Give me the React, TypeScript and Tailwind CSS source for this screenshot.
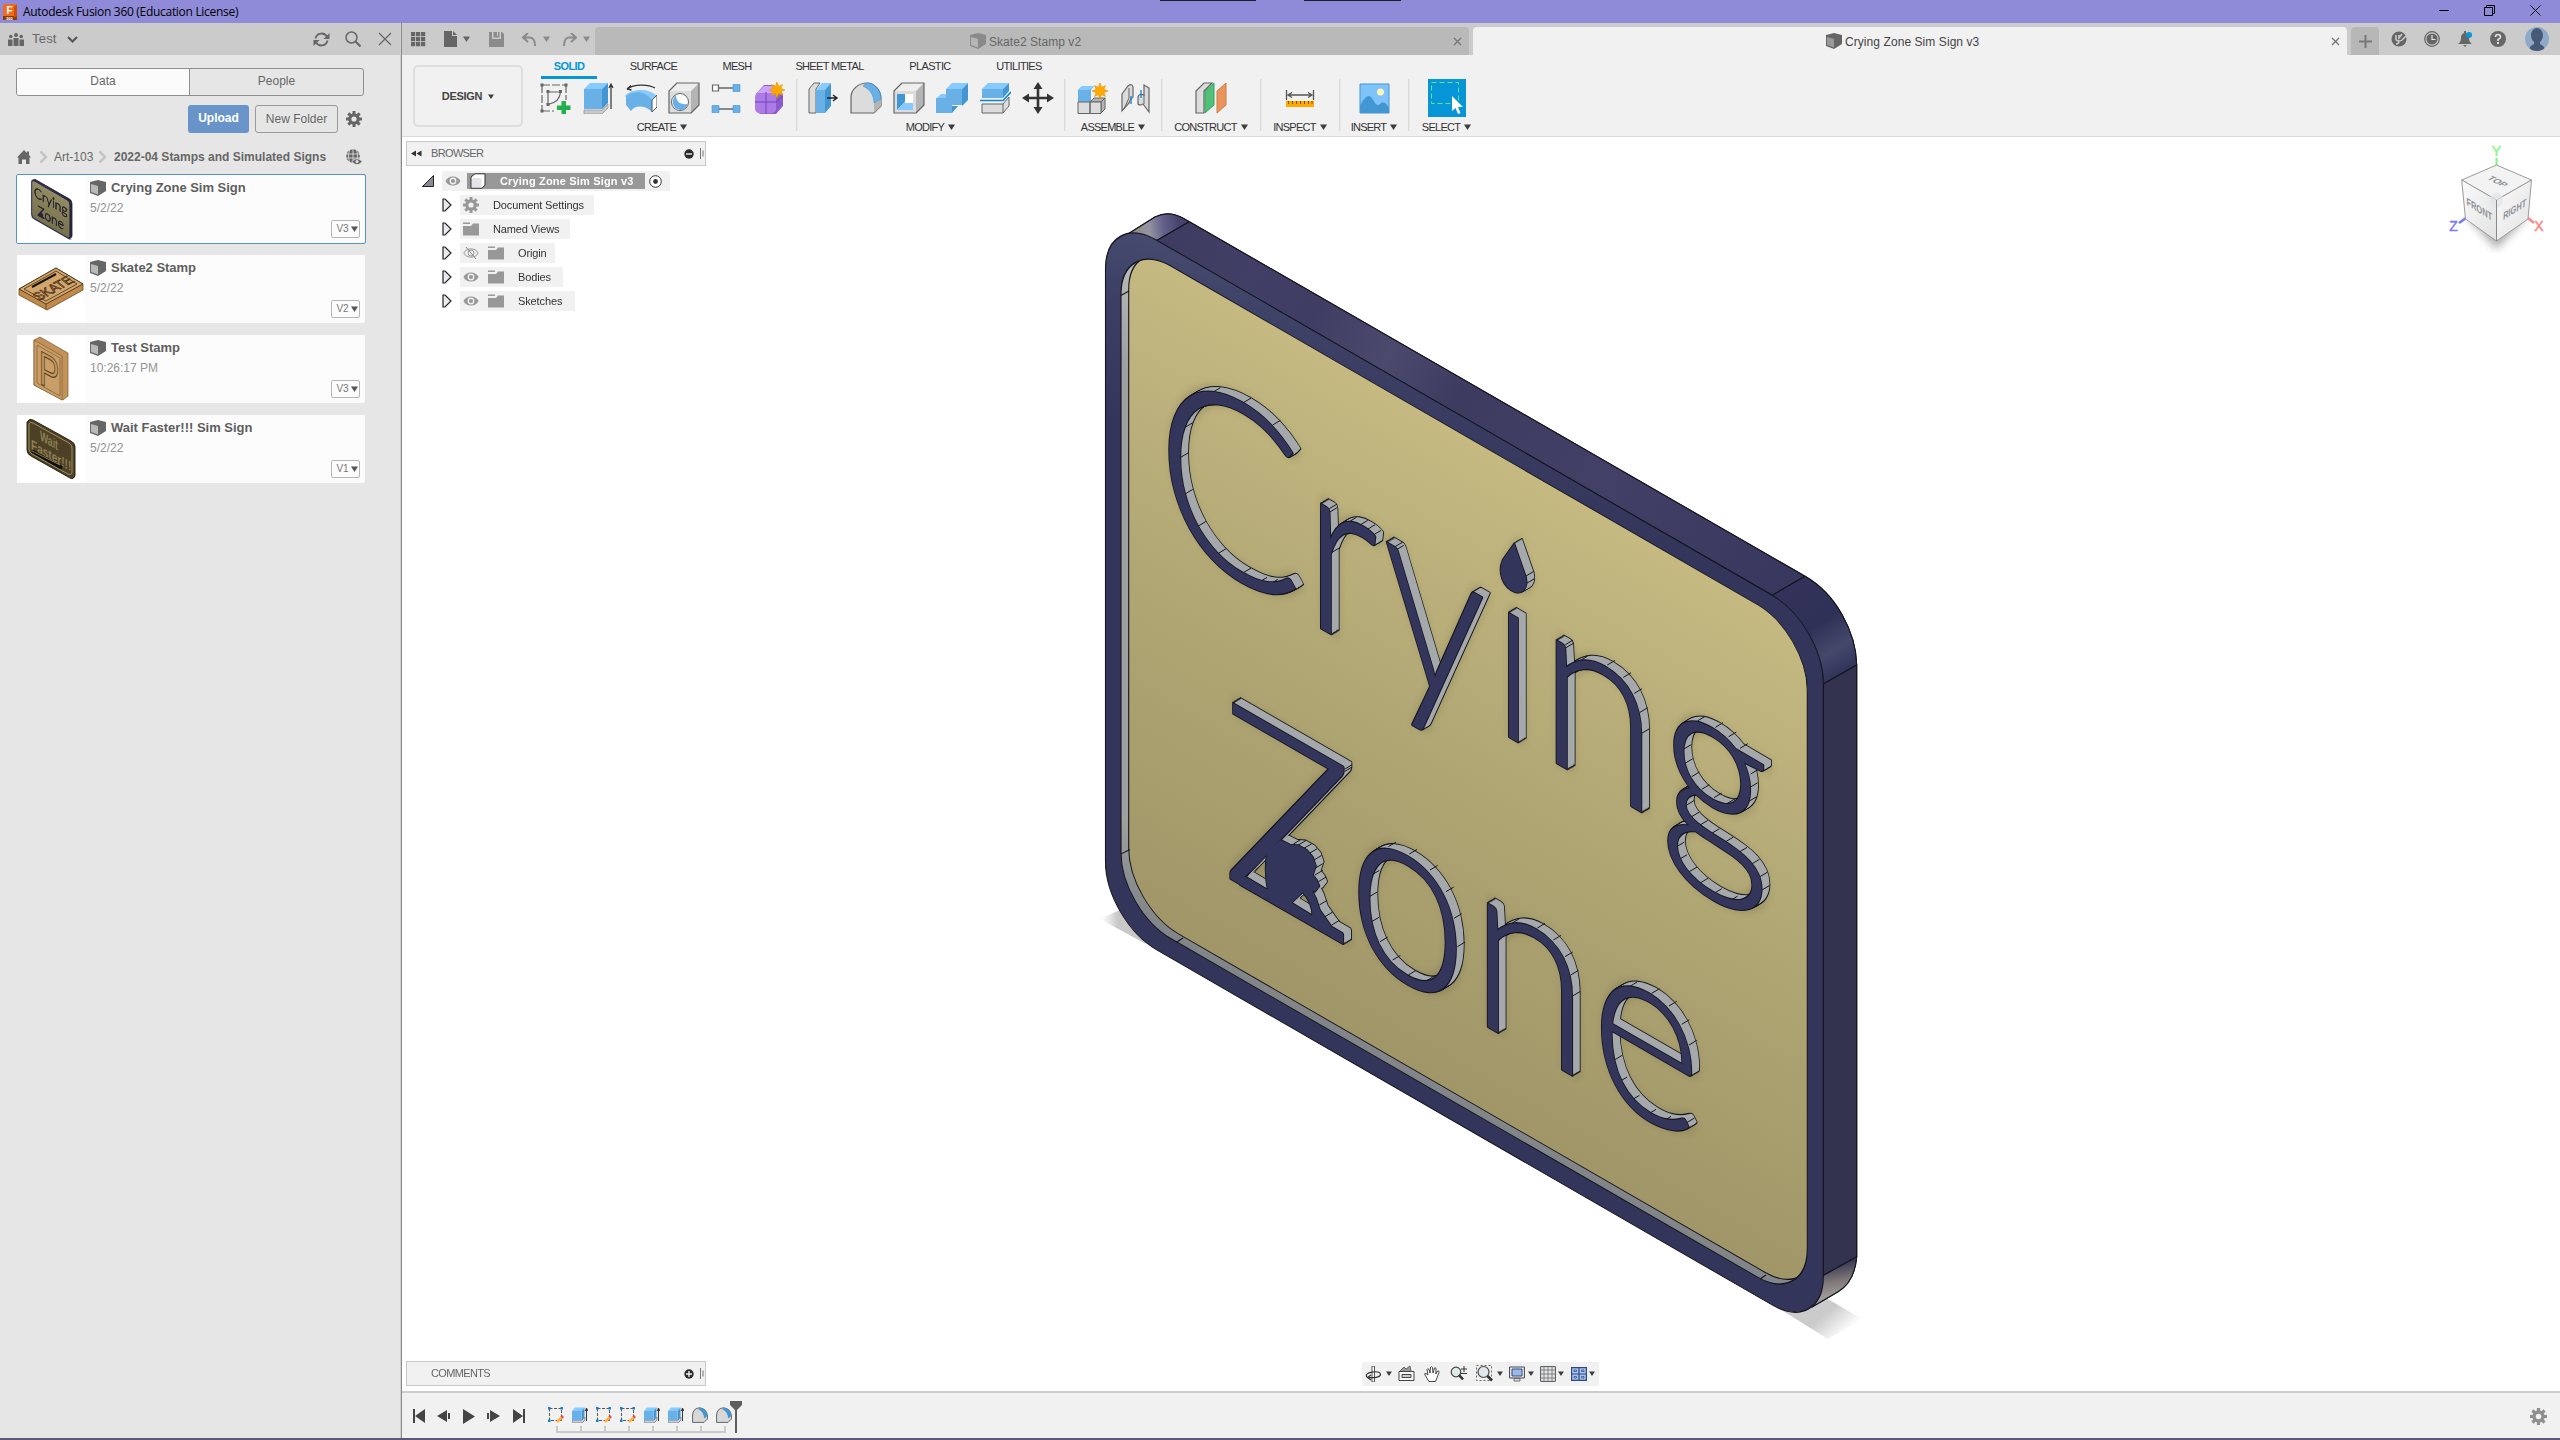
import React from "react";

const K = 0.577;
const DX = 7.7;
const DY = -4.6;

type Glyph = { ch: string; x0: number; x1: number; v0: number; v1: number; weight: number };

const GLYPHS: Glyph[] = [
  { ch: "C", x0: 1168.5, x1: 1296, v0: -314.5, v1: -133, weight: 300 },
  { ch: "r", x0: 1320.5, x1: 1376.5, v0: -261.5, v1: -133.6, weight: 300 },
  { ch: "y", x0: 1385.5, x1: 1482.5, v0: -258.5, v1: -89.8, weight: 300 },
  { ch: "ı", x0: 1508.3, x1: 1519, v0: -258.6, v1: -133.6, weight: 300 },
  { ch: "n", x0: 1556.2, x1: 1641.8, v0: -259.8, v1: -133.6, weight: 300 },
  { ch: "g", x0: 1667.3, x1: 1764, v0: -260, v1: -88.2, weight: 300 },
  { ch: "Z", x0: 1229.3, x1: 1344, v0: -9.2, v1: 168.9, weight: 300 },
  { ch: "o", x0: 1358.7, x1: 1457, v0: 42.6, v1: 172.2, weight: 300 },
  { ch: "n", x0: 1487.2, x1: 1572.5, v0: 43, v1: 169.8, weight: 300 },
  { ch: "e", x0: 1601.3, x1: 1691.5, v0: 40.5, v1: 169.6, weight: 300 },
];

let ctx: CanvasRenderingContext2D | null = null;
function fitGlyph(g: Glyph) {
  if (!ctx) ctx = document.createElement("canvas").getContext("2d");
  const c = ctx!;
  c.font = `${g.weight} 200px Lato`;
  const m = c.measureText(g.ch);
  const l = -m.actualBoundingBoxLeft;
  const r = m.actualBoundingBoxRight;
  const a = m.actualBoundingBoxAscent;
  const d = m.actualBoundingBoxDescent;
  const sx = (g.x1 - g.x0) / (r - l);
  const sy = (g.v1 - g.v0) / (a + d);
  return `matrix(1 ${K} 0 1 0 0) translate(${g.x0 - l * sx} ${g.v0 + a * sy}) scale(${sx} ${sy})`;
}

const DROP = "M1514.3 543.3 L1502.5 560 C1497.5 572 1502 587 1515 592.3 C1523 594.5 1528.5 588 1526 577 Z";
const MOUSE =
  "M1281 840 L1290 844.5 L1298 845 L1307 850 L1313 857 L1316 866 L1313 875 L1317 880 L1319.5 886 L1315 892 L1312 890 L1316 898 L1320 910 L1327 920 L1332 927 L1343.3 935 L1343.3 944 L1240 885 L1262 856 Z M1266.7 855 L1245.7 876.7 L1267.7 890 Q1264 872 1266.7 855 Z M1302.7 892.5 L1291.7 902.7 L1312.3 915.5 Q1312 903 1302.7 892.5 Z";

function Shapes({ fits, ...p }: { fits: string[] } & React.SVGProps<SVGGElement>) {
  return (
    <g {...p} fontSize="200" style={{ fontFamily: "Lato, sans-serif" }}>
      {GLYPHS.map((g, i) => (
        <text key={i} transform={fits[i]} fontWeight={g.weight}>
          {g.ch}
        </text>
      ))}
      <path d={DROP} />
      <path d={MOUSE} fillRule="evenodd" />
    </g>
  );
}

const c3 = (ox: number, oy: number, pts: number[][]) => pts.map(([x, y]) => [ox + x / 3, oy + y / 3]);
const TICKS = [
  ...c3(1080, 200, [[398, 577], [490, 608], [578, 675], [315, 682], [302, 772], [315, 882], [355, 978], [415, 1060], [490, 1118], [538, 1146], [570, 1152], [806, 966], [840, 975], [862, 988], [880, 1005], [748, 926], [748, 937], [756, 1057], [945, 1040], [948, 1050]]),
  ...c3(1440, 500, [[420, 482], [502, 495], [550, 532], [583, 580], [600, 637], [605, 700], [376, 434], [378, 443], [772, 663], [826, 682], [866, 710], [900, 745], [730, 748], [735, 790], [755, 830], [785, 868], [822, 893], [862, 910], [932, 822], [930, 862], [925, 905], [740, 915], [755, 950], [780, 975], [815, 1000], [857, 1025], [898, 1056], [935, 1092], [960, 1130], [966, 1170], [710, 1040], [718, 1078], [748, 1115], [782, 1148], [822, 1180], [870, 1202], [258, 228], [260, 250]]),
  ...c3(1080, 660, [[925, 560], [988, 582], [1050, 630], [1098, 695], [1122, 775], [1132, 860], [875, 645], [868, 710], [875, 785], [900, 845], [938, 900], [985, 945], [1040, 962], [793, 328], [793, 335], [640, 552], [655, 555], [672, 565], [688, 580], [702, 600], [705, 625], [705, 645], [715, 665], [718, 735], [735, 770], [755, 795]]),
  ...c3(1480, 840, [[95, 250], [172, 264], [220, 300], [255, 350], [272, 405], [278, 468], [448, 440], [515, 460], [567, 498], [605, 553], [627, 615], [403, 660], [418, 725], [455, 780], [505, 822], [550, 843], [620, 848]]),
];

const SKEW = `matrix(1 ${K} 0 1 0 0)`;
const STEPS = [8, 7, 6, 5, 4, 3, 2, 1];

function Sign({ plain = false }: { plain?: boolean }) {
  const fits = React.useMemo(() => GLYPHS.map(fitGlyph), []);
  return (
    <g strokeLinejoin="round">
      <defs>
        <linearGradient id="gold" x1="0" y1="-420" x2="0" y2="270" gradientUnits="userSpaceOnUse">
          <stop offset="0" stopColor="#c6ba82" />
          <stop offset="0.45" stopColor="#b2a875" />
          <stop offset="1" stopColor="#9f9567" />
        </linearGradient>
        <linearGradient id="front" x1="1105" y1="-427" x2="1170" y2="-240" gradientUnits="userSpaceOnUse">
          <stop offset="0" stopColor="#474d70" />
          <stop offset="0.45" stopColor="#3c3e64" />
          <stop offset="1" stopColor="#34355a" />
        </linearGradient>
        <linearGradient id="topface" x1="1160" y1="230" x2="1790" y2="590" gradientUnits="userSpaceOnUse">
          <stop offset="0" stopColor="#3e3b60" />
          <stop offset="0.14" stopColor="#423f66" />
          <stop offset="0.24" stopColor="#3f3d63" />
          <stop offset="0.36" stopColor="#4b4a6d" />
          <stop offset="0.47" stopColor="#3d3b60" />
          <stop offset="0.7" stopColor="#424066" />
          <stop offset="1" stopColor="#38375d" />
        </linearGradient>
        <linearGradient id="cornerTL" x1="1132" y1="232" x2="1180" y2="226" gradientUnits="userSpaceOnUse">
          <stop offset="0" stopColor="#8d897f" />
          <stop offset="0.35" stopColor="#9694a2" />
          <stop offset="0.65" stopColor="#64628a" />
          <stop offset="1" stopColor="#45436d" />
        </linearGradient>
        <linearGradient id="cornerTR" x1="1790" y1="590" x2="1840" y2="675" gradientUnits="userSpaceOnUse">
          <stop offset="0" stopColor="#32325a" />
          <stop offset="0.45" stopColor="#303156" />
          <stop offset="0.75" stopColor="#46486b" />
          <stop offset="1" stopColor="#32335a" />
        </linearGradient>
        <linearGradient id="cornerBR" x1="1838" y1="1262" x2="1845" y2="1298" gradientUnits="userSpaceOnUse">
          <stop offset="0" stopColor="#353553" />
          <stop offset="0.5" stopColor="#7e7777" />
          <stop offset="1" stopColor="#aaa5a5" />
        </linearGradient>
        <linearGradient id="wall" x1="0" y1="-410" x2="0" y2="263" gradientUnits="userSpaceOnUse">
          <stop offset="0" stopColor="#bdbfbf" />
          <stop offset="0.18" stopColor="#9ea1a2" />
          <stop offset="0.86" stopColor="#9ea1a2" />
          <stop offset="1" stopColor="#818486" />
        </linearGradient>
        <linearGradient id="shadowL" x1="1102" y1="0" x2="1125" y2="0" gradientUnits="userSpaceOnUse">
          <stop offset="0" stopColor="#c8c8c8" stopOpacity="0" />
          <stop offset="0.7" stopColor="#c8c8c8" />
        </linearGradient>
        <linearGradient id="shadowR" x1="1828" y1="1312" x2="1846" y2="1333" gradientUnits="userSpaceOnUse">
          <stop offset="0" stopColor="#cbcbcb" />
          <stop offset="1" stopColor="#cbcbcb" stopOpacity="0" />
        </linearGradient>
        <clipPath id="recess">
          <rect x="1121" y="-409.5" width="686.3" height="672.5" rx="50" ry="57" transform={SKEW} />
        </clipPath>
        <filter id="soft" x="-5%" y="-5%" width="110%" height="110%">
          <feGaussianBlur stdDeviation="3" />
        </filter>
      </defs>
      <path d="M1100 919 L1124 908 L1146 944 Z" fill="url(#shadowL)" />
      <path d="M1783 1311 L1826 1298 L1862 1319 L1828 1339 Z" fill="url(#shadowR)" />
      <g stroke="#15151f" strokeWidth="1.1">
        <path
          d="M1128 234 L1155 217 C1168 211 1177 214 1189.3 221.7 L1805 576.3 C1836 594 1856 632 1856.7 665 L1856.7 1256.7 C1855 1276 1848 1286 1838 1291.7 L1812 1307 L1500 900 Z"
          fill="#353553"
        />
        <path d="M1128 234 L1155 217 C1168 211 1177 214 1189.3 221.7 L1156.7 240.5 Z" fill="url(#cornerTL)" />
        <path d="M1156.7 240.5 L1189.3 221.7 L1805 576.3 L1772.3 595.3 Z" fill="url(#topface)" />
        <path d="M1772.3 595.3 L1805 576.3 C1836 594 1856 632 1856.7 665 L1823.3 684 Z" fill="url(#cornerTR)" />
        <path d="M1823.3 684 L1856.7 665 L1856.7 1256.7 L1823.3 1275.5 Z" fill="#33334f" />
        <path d="M1823.3 1275.5 L1856.7 1256.7 C1855 1276 1848 1286 1838 1291.7 L1812 1307 Z" fill="url(#cornerBR)" />
        <rect x="1105.5" y="-427.2" width="717.8" height="709.6" rx="51" ry="58" transform={SKEW} fill="url(#front)" />
        <g clipPath="url(#recess)">
          <rect x="1100" y="-440" width="730" height="730" transform={SKEW} fill="url(#wall)" stroke="none" />
          <rect
            x={1121 + DX}
            y={-409.5 + DY - K * DX}
            width="686.3"
            height="672.5"
            rx="50"
            ry="57"
            transform={SKEW}
            fill="url(#gold)"
          />
          <path d="M1120 296 l9 -5 M1120 854.5 l10 -5 M1174 944 l9 -6 M1757 1281 l9 -6" />
        </g>
        <rect x="1121" y="-409.5" width="686.3" height="672.5" rx="50" ry="57" transform={SKEW} fill="none" />
      </g>
      {!plain && (
        <Shapes fits={fits} fill="#6b6444" stroke="#6b6444" strokeWidth="7" opacity="0.3" filter="url(#soft)" transform={`translate(${DX / 2} ${DY / 2})`} />
      )}
      {!plain &&
        STEPS.map((s) => (
          <Shapes key={"o" + s} fits={fits} fill="none" stroke="#14181c" strokeWidth="1.600" transform={`translate(${(DX * s) / 8} ${(DY * s) / 8})`} />
        ))}
      {!plain &&
        STEPS.map((s) => (
          <Shapes key={"f" + s} fits={fits} fill="#a6a9ab" transform={`translate(${(DX * s) / 8} ${(DY * s) / 8})`} />
        ))}
      {!plain && <path d={TICKS.map(([x, y]) => `M${x} ${y} l${DX} ${DY}`).join(" ")} stroke="#14181c" strokeWidth="1" />}
      <Shapes fits={fits} fill="#14141f" stroke="#14141f" strokeWidth={plain ? 5 : 1.6} />
      <Shapes fits={fits} fill="#34355a" />
    </g>
  );
}

function ViewCube() {
  return (
    <g style={{ fontFamily: '"Liberation Sans", sans-serif' }}>
      <defs>
        <linearGradient id="vcL" x1="0" y1="0" x2="1" y2="1">
          <stop offset="0" stopColor="#fafafa" />
          <stop offset="1" stopColor="#e2e2e2" />
        </linearGradient>
        <filter id="vcblur">
          <feGaussianBlur stdDeviation="4" />
        </filter>
      </defs>
      <path d="M2466 216 L2496.5 249 L2528 216 Z" fill="#777" opacity="0.6" filter="url(#vcblur)" />
      <path d="M2496.5 158 V166" stroke="#7df57d" strokeWidth="2" />
      <path d="M2466 218 L2459 223" stroke="#7777f5" strokeWidth="2.5" />
      <path d="M2528 218 L2534 223" stroke="#f58a8a" strokeWidth="2.5" />
      <g stroke="#9c9c9c" strokeWidth="1" strokeLinejoin="round">
        <path d="M2496.5 165 L2531.5 180 L2496.5 200 L2461.7 180 Z" fill="#f3f3f4" />
        <path d="M2461.7 180 L2496.5 200 V241 L2465.5 219 Z" fill="url(#vcL)" />
        <path d="M2531.5 180 L2496.5 200 V241 L2528 219 Z" fill="url(#vcL)" />
      </g>
      <path d="M2496.5 192 l6 4 v8 l-6 4 l-6 -4 v-8 Z" fill="#dfe3e8" opacity="0.7" />
      <path d="M2496.5 200 V241" stroke="#8a8a8a" />
      <g fill="#8f9297" fontSize="11" textAnchor="middle" fontWeight="bold">
        <text transform="matrix(.75 .38 -.72 .42 2495 183)">TOP</text>
        <text transform="matrix(.68 .42 .05 1.0 2479.5 213)">FRONT</text>
        <text transform="matrix(.68 -.42 -.05 1.0 2514.5 213)">RIGHT</text>
      </g>
      <g fontSize="14" textAnchor="middle" strokeWidth=".5">
        <text x="2496.5" y="156" fill="#8cf58c" stroke="#8cf58c">Y</text>
        <text x="2453.5" y="231" fill="#7a7af7" stroke="#7a7af7">Z</text>
        <text x="2539" y="231" fill="#f58a8a" stroke="#f58a8a">X</text>
      </g>
    </g>
  );
}

/* ---------- small icons ---------- */
const Tri = ({ c = "#3c3c3c", w = 7 }: { c?: string; w?: number }) => (
  <svg width={w} height={w - 1} viewBox="0 0 7 6" className="shrink-0">
    <path d="M0 .5 H7 L3.5 6 Z" fill={c} />
  </svg>
);

const Svg = ({ w = 16, h, children, className = "" }: { w?: number; h?: number; children: React.ReactNode; className?: string }) => (
  <svg width={w} height={h ?? w} viewBox={`0 0 ${w} ${h ?? w}`} className={"shrink-0 " + className} fill="none">
    {children}
  </svg>
);

const DocCube = ({ c = "#666", f = "#b9b9b9", w = 16 }: { c?: string; f?: string; w?: number }) => (
  <svg width={w} height="16" viewBox="0 0 16 16" className="shrink-0">
    <path d="M0 2 L8 0 L16 2 V11 L8 16 L0 13 Z" fill={c} />
    <path d="M1 4 L8 6 V14.6 L1 12 Z" fill={f} />
  </svg>
);

const Gear = ({ w = 16, c = "#666" }: { w?: number; c?: string }) => (
  <svg width={w} height={w} viewBox="0 0 16 16" className="shrink-0">
    <circle cx="8" cy="8" r="4.2" fill="none" stroke={c} strokeWidth="3.2" />
    {[0, 45, 90, 135, 180, 225, 270, 315].map((a) => (
      <rect key={a} x="6.5" y="0" width="3" height="3.4" fill={c} transform={`rotate(${a} 8 8)`} />
    ))}
  </svg>
);

const Eye = () => (
  <Svg>
    <path d="M0.5 8 C3 2 13 2 15.5 8 C13 14 3 14 0.5 8 Z" fill="#989898" />
    <circle cx="8" cy="8" r="3.4" fill="#f1f1f1" />
    <circle cx="8" cy="8" r="2.1" fill="#989898" />
  </Svg>
);
const EyeOff = () => (
  <Svg>
    <path d="M0.8 8 C3 2.500 13 2.500 15.2 8 C13 13.500 3 13.500 .8 8 Z" stroke="#989898" />
    <circle cx="8" cy="8" r="3" stroke="#989898" />
    <path d="M3 2 L13 14" stroke="#888" />
  </Svg>
);
const Folder = () => (
  <Svg>
    <path d="M0 1.5 H7 V3 H0 Z M0 5 H8 L10 2.5 H16 V14.5 H0 Z" fill="#989898" />
  </Svg>
);
const Expand = () => (
  <Svg w={10} h={14}>
    <path d="M1 1 H3 L9 7 L3 13 H1 Z" fill="#e9e9ee" stroke="#222" strokeWidth="1.2" />
  </Svg>
);

const G = "#dcdcdc";
const GD = "#b4b4b4";
const GS = "#666";
const B1 = "#69b0e6";
const B2 = "#87caff";
const B3 = "#4296d2";

const Star = ({ x, y }: { x: number; y: number }) => (
  <path
    transform={`translate(${x} ${y})`}
    d="M0 -8 L1.7 -3.6 L5.5 -5.5 L3.9 -1.6 L8 0 L3.9 1.6 L5.5 5.5 L1.7 3.6 L0 8 L-1.7 3.6 L-5.5 5.5 L-3.9 1.6 L-8 0 L-3.9 -1.6 L-5.5 -5.5 L-1.7 -3.6 Z"
    fill="#ffa800"
    stroke="#e69500"
    strokeWidth=".6"
  />
);

const Box = ({ a, b, c, s }: { a: string; b: string; c: string; s?: string }) => (
  <g stroke={s ?? "none"} strokeWidth="1.2" strokeLinejoin="round">
    <path d="M1 9 L9 1 H31 L23 9 Z" fill={b} stroke="none" />
    <path d="M23 9 L31 1 V23 L23 31 Z" fill={c} stroke="none" />
    <path d="M1 9 H23 V31 H1 Z" fill={a} stroke="none" />
    <path d="M1 9 L9 1 H31 V23 L23 31 H1 Z" />
  </g>
);

const tool: Record<string, React.ReactNode> = {
  sketch: (
    <>
      <path d="M3 3 H27 M3 3 V29 M27 3 V18 M3 29 H15" stroke={GS} strokeWidth="1.2" strokeDasharray="8 2" />
      <path d="M1.5 1.5 h3 v3 h-3z M25.5 1.5 h3 v3 h-3z M1.5 27.5 h3 v3 h-3z M7.5 8 h3 v3 h-3z M20 8 h3 v3 h-3z M7.5 21 h3 v3 h-3z" fill={GS} />
      <path d="M9 10 H21.5 C21 17 17 21 9 22.5 Z" stroke={GS} strokeWidth="1.2" />
      <path d="M22.5 19 h4.5 v4.5 h4.5 v4.5 h-4.5 v4 h-4.500 v-4 h-4.500 v-4.500 h4.500 Z" fill="#22b04c" />
    </>
  ),
  extrude: (
    <>
      <path d="M2 28 H20 L26 22 V26 L20 32 H2 Z" fill="#c9c9c9" stroke="#999" strokeWidth=".8" />
      <path d="M2 7 L8 1 H26 L20 7 Z" fill={B2} />
      <path d="M20 7 L26 1 V21 L20 27 Z" fill={B3} />
      <path d="M2 7 H20 V27 H2 Z" fill={B1} />
      <path d="M29 27 V3 M27 6 L29 2 L31 6" stroke="#333" strokeWidth="1.2" />
    </>
  ),
  revolve: (
    <>
      <path d="M2 7 C9 2 23 2 30 6 M2 7 l4 -3.500 M2 7 l4.500 1" stroke="#333" strokeWidth="1.3" />
      <path d="M0 14 C5 7 23 5 32 14 L27 20 C22 12 9 12 5 20 Z" fill={B2} />
      <path d="M1 14 C9 8 20 9 27 18 V30 C20 23 10 23 6 29 L1 23 Z" fill={B1} />
      <path d="M27 18 L32 13 V25 L27 30 Z" fill="#fff" stroke="#555" />
    </>
  ),
  hole: (
    <>
      <Box a={G} b="#eee" c={GD} s={GS} />
      <circle cx="12" cy="20" r="8.5" fill="#fff" stroke={GS} />
      <path d="M8 13 C2 19 5 28 14 28 C19 26 20 22 19 22 C13 23 8 20 8 13 Z" fill={B1} />
    </>
  ),
  pattern: (
    <>
      <path d="M8 6 H22 M8 27 H22" stroke={GS} strokeWidth="1.4" />
      <path d="M1.500 3 h6 v6 h-6z" fill="#fff" stroke={GS} strokeWidth="1.2" />
      <path d="M22 2.500 h7 v7 h-7z M1 23.500 h7 v7 h-7z M22 23.500 h7 v7 h-7z" fill={B1} stroke={B3} strokeWidth=".6" />
    </>
  ),
  form: (
    <>
      <path d="M2 12 L10 3 H20 L29 12 V24 L22 32 H6 L2 28 Z" fill="#8a5cc9" />
      <rect x="1" y="10" width="21" height="21.500" rx="5" fill="#ad7be8" />
      <path d="M3 11 L10 4 H21 L22 11 Z" fill="#cda3fa" />
      <path d="M12 10 V32 M1 20 H22 L29 14" stroke="#7443b5" />
      <Star x={23} y={8} />
    </>
  ),
  press: (
    <>
      <path d="M2 7 L7 1 H13 L9 7 V31 H2 Z" fill={G} stroke={GS} />
      <path d="M9 8 L15 1 H24 L18 8 Z" fill={B2} />
      <path d="M18 8 L24 1 V24 L18 31 Z" fill={B3} />
      <path d="M9 8 H18 V31 H9 Z" fill={B1} />
      <path d="M20 16 H29 M26 13 L30 16 L26 19" stroke="#222" strokeWidth="1.4" />
    </>
  ),
  fillet: (
    <>
      <path d="M1 31 V15 C1 8 8 1 17 1 C25 1 31 9 31 17 V24 L24 31 Z" fill={G} stroke={GS} strokeWidth="1.2" />
      <path d="M24 21 L31 17 V24 L24 31 Z" fill={GD} />
      <path d="M13 4 L17 1 C25 1 31 9 31 17 L24 21 C24 12 19 7 13 4 Z" fill={B1} stroke={B3} strokeWidth=".6" />
    </>
  ),
  shell: (
    <>
      <Box a={G} b="#eee" c={GD} s={GS} />
      <path d="M4 12 H20 V28 H4 Z" fill="#fff" />
      <path d="M4 12 H12 V20 L4 28 Z" fill={B3} />
      <path d="M4 28 L11 21 H20 V28 Z" fill={B2} />
    </>
  ),
  combine: (
    <>
      <path d="M10 7 L16 1 H32 L26 7 Z M0 17 L5 12 H10 V17 Z" fill={B2} />
      <path d="M26 7 L32 1 V18 L26 24 Z M16 24 h6 L16 31 Z" fill={B3} />
      <path d="M10 7 H26 V23 H16 V31 H0 V16 H10 Z" fill={B1} />
    </>
  ),
  split: (
    <>
      <path d="M3 7 L9 1 H30 L24 7 Z" fill={B2} />
      <path d="M3 7 H24 V16 H3 Z" fill={B1} />
      <path d="M24 7 L30 1 V9 L24 16 Z" fill={B3} />
      <path d="M1 18.500 H24 L32 10" stroke="#0b86d6" strokeWidth="1.6" />
      <path d="M3 22 H24 V31 H3 Z M24 22 L30 15 V24 L24 31" fill={G} stroke={GS} />
    </>
  ),
  move: (
    <>
      <path d="M16 4 V28 M4 16 H28" stroke="#333" strokeWidth="2.600" />
      <path d="M16 0 L20.500 7 H11.500 Z M16 32 L20.500 25 H11.500 Z M0 16 L7 11.500 V20.500 Z M32 16 L25 11.500 V20.500 Z" fill="#333" />
    </>
  ),
  newcomp: (
    <>
      <path d="M2 8 L6 4 H18 L15 8 V20 H2 Z" fill={B1} />
      <path d="M2 8 L6 4 H18 L14 8 Z" fill={B2} />
      <path d="M14 20 L18 16 H29 L25 20 Z M25 20 L29 16 V27 L25 31 Z" fill={GD} stroke={GS} />
      <path d="M2 20 H14 V31.500 H2 Z M14 20 H25 V31.500 H14 Z" fill={G} stroke={GS} />
      <Star x={24} y={9} />
    </>
  ),
  joint: (
    <>
      <path d="M3 12 L9 4 Q13 1 14 5 V15 Q11 17 10 21 L3 29 Z" fill={G} stroke={GS} strokeWidth="1.200" />
      <path d="M10 6 V16 L5 27" stroke={GS} />
      <path d="M30 6 L25 3 V13 Q20 11 19 15 V22 Q21 24 24 22 L30 30 Z" fill={G} stroke={GS} strokeWidth="1.200" />
      <path d="M25 13 V22" stroke={GS} />
      <path d="M12 14 V22 M22 8 V16" stroke="#0b86d6" strokeWidth="1.300" />
    </>
  ),
  construct: (
    <>
      <path d="M1 9 L9 1 H17 L9 9 V31 H1 Z" fill={G} stroke={GS} strokeWidth="1.200" />
      <path d="M10 9 L19 1 V23 L10 31 Z" fill="#52c078" stroke="#35a55c" />
      <path d="M22 9 L31 1 V23 L22 31 Z" fill="#e8945c" stroke="#d07c44" />
    </>
  ),
  inspect: (
    <>
      <path d="M2.500 8 V18 M29.500 8 V18 M4 13 H28 M8 10.500 L4 13 L8 15.500 M24 10.500 L28 13 L24 15.500" stroke="#555" strokeWidth="1.300" />
      <path d="M2 19 H30 V25 H2 Z" fill="#ffa800" />
      <path d="M4.500 19 v3 M8.500 19 v3 M12.500 19 v3 M16.500 19 v3 M20.500 19 v3 M24.500 19 v3 M28 19 v3" stroke="#7a5200" />
    </>
  ),
  insert: (
    <>
      <path d="M2 2 H31 V31 H2 Z" fill="#7ec4fb" stroke={B3} />
      <path d="M2 24 C6 16 10 12 13 15 C17 20 18 25 22 22 C26 19 28 21 31 26 V31 H2 Z" fill={B3} />
      <circle cx="22.500" cy="10" r="3.500" fill="#fff6b8" />
    </>
  ),
};

const Tool = ({ n }: { n: string }) => (
  <div className="flex w-[43px] justify-center">
    <Svg w={32}>{tool[n]}</Svg>
  </div>
);

const Group = ({ label, icons, w, pad = "" }: { label: string; icons: string[]; w: string; pad?: string }) => (
  <div className={`flex h-[57px] flex-col items-center ${w} ${pad}`}>
    <div className="flex h-[38px] items-center">
      {icons.map((i) =>
        i === "select" ? (
          <div key={i} className="h-[38px] w-[38px] bg-[#0696d7]">
            <Svg w={38}>
              <rect x="3.500" y="3.500" width="27" height="21" stroke="#63e08a" strokeDasharray="5 3" />
              <path d="M24 17 V32 L27.500 29 L30 35 L32.500 34 L30 28 H35 Z" fill="#fff" />
            </Svg>
          </div>
        ) : (
          <Tool key={i} n={i} />
        ),
      )}
    </div>
    <div className="mt-[2px] flex h-4 items-center gap-[4px] text-[11px] tracking-[-0.75px] text-[#333]">
      <span>{label}</span>
      <Tri />
    </div>
  </div>
);

const Sep = () => <div className="h-[52px] w-px bg-[#dadada] shadow-[1px_0_0_#e8e8e8]" />;

/* ---------- data panel ---------- */
const files = [
  { t: "Crying Zone Sim Sign", d: "5/2/22", v: "V3", k: 0 },
  { t: "Skate2 Stamp", d: "5/2/22", v: "V2", k: 1 },
  { t: "Test Stamp", d: "10:26:17 PM", v: "V3", k: 2 },
  { t: "Wait Faster!!! Sim Sign", d: "5/2/22", v: "V1", k: 3 },
];

function Thumb({ k }: { k: number }) {
  if (k === 0)
    return (
      <svg width="68" height="68" viewBox="846 141 1245 1245" className="brightness-[0.75]">
        <Sign plain />
      </svg>
    );
  if (k === 1)
    return (
      <Svg w={68}>
        <path d="M2 34 L39 13 L66 29 V35 L30 55 L2 40 Z" fill="#c08a4c" stroke="#6d4a20" strokeWidth=".8" />
        <path d="M2 34 L39 13 L66 29 L29 49 Z" fill="#d0a56e" stroke="#4a3216" strokeWidth=".9" />
        <path d="M7 34 L39 16 L60 29 L29 46 Z" stroke="#5a3d1c" strokeWidth=".9" />
        <path d="M29 49 V55" stroke="#6d4a20" />
        <path d="M15 32 L39 19" stroke="#1e1408" strokeWidth="2" />
        <text transform="matrix(.8 -.44 .8 .62 22 46)" fontSize="14" fill="#c08a4c" stroke="#3c270f" strokeWidth=".7" style={{ fontFamily: '"Liberation Sans"' }}>
          SKATE
        </text>
      </Svg>
    );
  if (k === 2)
    return (
      <Svg w={68}>
        <path d="M17 5 L23 2 L51 18 V61 L46 65 L17 50 Z" fill="#c3925a" stroke="#7d5728" strokeWidth=".7" />
        <path d="M17 5 L45 21 V65 L17 50 Z" fill="#c89f68" stroke="#8a6232" strokeWidth=".8" />
        <path d="M20 10 L43 23 V61 L20 48 Z" stroke="#8a6232" strokeWidth=".8" />
        <text transform="matrix(.92 .5 0 1.45 22 48)" fontSize="33" fill="#c49a62" stroke="#5f4220" strokeWidth=".8" style={{ fontFamily: '"Liberation Sans"' }}>
          P
        </text>
      </Svg>
    );
  return (
    <Svg w={68}>
      <path d="M10 7 Q12 3 16 5 L54 26 Q58 28 58 32 V60 Q57 65 53 63 L14 41 Q10 39 10 35 Z" fill="#4c4026" stroke="#2a2413" />
      <path d="M12 9 Q13 6 16 8 L52 28 Q55 30 55 33 V58 Q54 61 51 59 L15 39 Q12 37 12 34 Z" stroke="#9c8f60" strokeWidth="1" />
      <g fill="#8d7f52" fontSize="14" fontWeight="bold" style={{ fontFamily: '"Liberation Sans"' }}>
        <text transform="matrix(.62 .36 0 1 23 25)">Wait</text>
        <text transform="matrix(.72 .4 0 1 14 34)">Faster!!!</text>
      </g>
      <path d="M15 36 L45 53" stroke="#0e0c06" strokeWidth="3.500" />
      <path d="M15 36 L43 50" stroke="#a6986a" strokeWidth=".8" />
    </Svg>
  );
}

const Chev = () => (
  <Svg w={9} h={14}>
    <path d="M1.500 1.500 L7 7 L1.500 12.500" stroke="#c4c4c4" strokeWidth="2.500" />
  </Svg>
);

function DataPanel() {
  return (
    <aside className="flex h-full w-[401px] shrink-0 flex-col border-r border-[#d0d0d0] bg-[#e6e6e6] text-xs text-[#666]">
      <div className="flex h-8 items-center bg-[#cbcbcb] pl-2">
        <Svg w={16} h={13}>
          <circle cx="2.800" cy="3.500" r="1.800" fill="#666" />
          <circle cx="8" cy="2" r="2" fill="#666" />
          <circle cx="13.200" cy="3.500" r="1.800" fill="#666" />
          <path d="M0 6.500 H4.500 V13 H0 Z M5.500 5 H10.500 V13 H5.500 Z M11.500 6.500 H16 V13 H11.500 Z" fill="#666" />
        </Svg>
        <span className="ml-2 text-[13px] tracking-[0.2px]">Test</span>
        <Svg w={11} h={7} className="ml-[10px]">
          <path d="M1 1 L5.500 5.500 L10 1" stroke="#555" strokeWidth="2" />
        </Svg>
        <Svg w={17} h={15} className="ml-[235px]">
          <path d="M2.500 6.500 C4 .5 11 0 14 4.500 M14.500 8.500 C13 14.500 6 15 3 10.500" stroke="#666" strokeWidth="1.800" />
          <path d="M16.500 1 V7 H10.500 Z M.5 14 V8 H6.500 Z" fill="#666" />
        </Svg>
        <Svg w={16} className="ml-[15px]">
          <circle cx="6.500" cy="6.500" r="5.500" stroke="#666" strokeWidth="1.500" />
          <path d="M10.500 10.500 L15.500 15.500" stroke="#666" strokeWidth="2" />
        </Svg>
        <Svg w={14} className="ml-[17px]">
          <path d="M1 1 L13 13 M13 1 L1 13" stroke="#666" strokeWidth="1.200" />
        </Svg>
      </div>
      <div className="ml-4 mt-[13px] flex h-7 w-[348px] overflow-hidden rounded-[3px] border border-[#8f8f8f] leading-[25px]">
        <div className="w-[173px] border-r border-[#8f8f8f] bg-[#fbfbfb] text-center">Data</div>
        <div className="flex-1 text-center">People</div>
      </div>
      <div className="ml-[188px] mt-[9px] flex h-7 items-center">
        <div className="h-7 w-[61px] rounded-[3px] bg-[#6894ca] text-center font-bold leading-[27px] text-white">Upload</div>
        <div className="ml-[6px] h-7 w-[83px] rounded-[3px] border border-[#9a9a9a] text-center leading-[27px]">New Folder</div>
        <div className="ml-2">
          <Gear />
        </div>
      </div>
      <div className="ml-[17px] mt-3 flex h-6 items-center">
        <Svg w={14} h={14}>
          <path d="M7 0 L10 3 V1.500 H12 V5 L14 7.500 H12.500 V14 H9 V9.500 H5 V14 H1.500 V7.500 H0 Z" fill="#666" />
        </Svg>
        <span className="ml-2">
          <Chev />
        </span>
        <span className="ml-[6px] w-[40px]">Art-103</span>
        <span className="ml-[4px]">
          <Chev />
        </span>
        <span className="ml-[7px] w-[232px] whitespace-nowrap font-bold">2022-04 Stamps and Simulated Signs</span>
        <Svg w={16}>
          <circle cx="7" cy="7" r="6.800" fill="#666" />
          <path d="M0 5 H14 M0 9 H14 M7 0 V14 M4 0 C2 4 2 10 4 14 M10 0 C12 4 12 10 10 14" stroke="#e6e6e6" strokeWidth=".8" />
          <path d="M6 12.500 C8 9 14 9 16 12.500 C14 16.500 8 16.500 6 12.500 Z" fill="#666" stroke="#e6e6e6" strokeWidth=".8" />
          <circle cx="11" cy="12.500" r="1.500" fill="#e6e6e6" />
        </Svg>
      </div>
      <div className="mt-[5px] flex flex-col gap-[10px] pl-4">
        {files.map((f, i) => (
          <div
            key={f.t}
            className={`flex h-[70px] w-[350px] overflow-hidden rounded-[2px] border bg-clip-padding ${i === 0 ? "border-[#5a8fd0]" : "border-transparent"} bg-[#fcfcfc]`}
          >
            <div className="h-[68px] w-[68px] bg-white">
              <Thumb k={f.k} />
            </div>
            <div className="flex flex-1 flex-col pl-[5px]">
              <div className="mt-1 flex h-[17px] items-center gap-[5px]">
                <DocCube />
                <span className="text-[13px] font-bold tracking-[-0.02px] text-[#5e5e5e]">{f.t}</span>
              </div>
              <div className="mt-1 leading-4 text-[#949494]">{f.d}</div>
              <div className="ml-[241px] mt-[4px] flex h-[18px] w-[29px] items-center justify-center gap-[2px] rounded-[2px] border border-[#b5b5b5] pl-[3px] text-[10px] text-[#777]">
                <span>{f.v}</span>
                <Tri c="#555" />
              </div>
            </div>
          </div>
        ))}
      </div>
    </aside>
  );
}

/* ---------- header ---------- */
function TabStrip() {
  return (
    <div className="flex h-8 items-center bg-[#cbcbcb]">
      <div className="flex w-[193px] items-center pl-[9px]">
        <Svg w={15}>
          {[0, 5, 10].map((y) => [0, 5, 10].map((x) => <rect key={`${x}${y}`} x={x} y={y} width="4.200" height="4.200" fill="#666" />))}
        </Svg>
        <Svg w={13} h={16} className="ml-[18px]">
          <path d="M0 0 H8 V5 H13 V16 H0 Z M9 0 L13 4 H9 Z" fill="#666" />
        </Svg>
        <span className="ml-[6px]"><Tri c="#666" /></span>
        <Svg w={15} className="ml-[19px]">
          <path d="M0 0 H3 V7 H12 V0 H13 L15 2 V15 H0 Z M4.500 0 H8 V4 H9 V0 H10.500 V5.500 H4.500 Z M4 9 H11 V15 H9.500 V11 H7 V15 H4 Z" fill="#8b8b8b" />
        </Svg>
        <Svg w={14} h={13} className="ml-[18px]">
          <path d="M6 0 L1 4.500 L6 9 M1 4.500 H8 Q13 5 13 13" stroke="#8b8b8b" strokeWidth="2" />
        </Svg>
        <span className="ml-[7px]"><Tri c="#8b8b8b" /></span>
        <Svg w={14} h={13} className="ml-[13px]">
          <path d="M8 0 L13 4.500 L8 9 M13 4.500 H6 Q1 5 1 13" stroke="#8b8b8b" strokeWidth="2" />
        </Svg>
        <span className="ml-[6px]"><Tri c="#8b8b8b" /></span>
      </div>
      <div className="flex h-7 w-[874px] items-center self-end rounded-t-[4px] bg-[#b9b9b9] text-xs text-[#666]">
        <div className="ml-[375px] mr-[3px]"><DocCube c="#8a8a8a" f="#b5b5b5" /></div>
        <span className="w-[464px] pt-px tracking-[0.05px]">Skate2 Stamp v2</span>
        <Svg w={9}><path d="M1 1 L8 8 M8 1 L1 8" stroke="#777" strokeWidth="1.400" /></Svg>
      </div>
      <div className="ml-1 flex h-7 w-[874px] items-center self-end rounded-t-[4px] bg-[#f1f1f1] text-xs text-[#444]">
        <div className="ml-[353px] mr-[3px]"><DocCube f="#999" /></div>
        <span className="w-[486px] pt-px tracking-[0.07px]">Crying Zone Sim Sign v3</span>
        <Svg w={9}><path d="M1 1 L8 8 M8 1 L1 8" stroke="#777" strokeWidth="1.400" /></Svg>
      </div>
      <div className="ml-1 flex h-7 w-7 items-center justify-center self-end rounded-t-[4px] bg-[#b7b7b7]">
        <Svg w={13}><path d="M6.500 0 V13 M0 6.500 H13" stroke="#777" strokeWidth="2" /></Svg>
      </div>
      <div className="ml-[12px] flex items-center gap-[17px]">
        <Svg w={16}>
          <circle cx="8" cy="8" r="7.500" fill="#666" />
          <path d="M5 4 V8 Q5 10 8 10 Q11 10 12 8 L15 5 M8 4 V7 L11 3 M5 13 Q8 13 8 10" stroke="#cbcbcb" strokeWidth="1.500" />
        </Svg>
        <Svg w={16}>
          <circle cx="8" cy="8" r="7.300" stroke="#666" strokeWidth="1.200" />
          <circle cx="8" cy="8" r="5.600" fill="#666" />
          <path d="M8 4 V8.500 H11.500" stroke="#e6e6e6" strokeWidth="1.200" />
        </Svg>
        <Svg w={16}>
          <path d="M7 0 H9 V2 Q12 3 12 7 Q12 11 15 13 H1 Q4 11 4 7 Q4 3 7 2 Z M6 14 H10 L8 16 Z" fill="#666" />
          <circle cx="12" cy="4" r="3" fill="#0696d7" />
        </Svg>
        <Svg w={16}>
          <circle cx="8" cy="8" r="8" fill="#666" />
          <path d="M5.500 6 Q5.500 3.500 8 3.500 Q10.500 3.500 10.500 6 Q10.500 7.500 8 8.500 V10" stroke="#e0e0e0" strokeWidth="1.700" />
          <rect x="7" y="11" width="2" height="2" fill="#e0e0e0" />
        </Svg>
        <Svg w={24} className="ml-[2px]">
          <clipPath id="av"><circle cx="12" cy="12" r="12" /></clipPath>
          <g clipPath="url(#av)">
            <rect width="24" height="24" fill="#8fa9c9" />
            <ellipse cx="12" cy="8.500" rx="6" ry="7.500" fill="#465a78" />
            <path d="M9 12 H15 V17 Q20 19 20 24 H4 Q4 19 9 17 Z" fill="#465a78" />
          </g>
        </Svg>
      </div>
    </div>
  );
}

const ribbon: [string, string][] = [
  ["SOLID", "w-[56px]"],
  ["SURFACE", "w-[113px]"],
  ["MESH", "w-[54px]"],
  ["SHEET METAL", "w-[131px]"],
  ["PLASTIC", "w-[70px]"],
  ["UTILITIES", "w-[108px]"],
];

function Ribbon() {
  return (
    <div className="flex h-[82px] border-b border-[#d9d9d9] bg-[#f1f1f1]">
      <div className="ml-[11px] mt-[10px] flex h-[62px] w-[110px] items-center justify-center gap-[6px] rounded-[5px] border-2 border-[#dedede] text-[11px] font-bold tracking-[-0.3px] text-[#444]">
        DESIGN <Tri w={6} />
      </div>
      <div className="flex flex-col">
        <div className="ml-[18px] flex h-6 text-[11px] tracking-[-0.65px] text-[#333]">
          {ribbon.map(([t, w], i) => (
            <div key={t} className={`${w} h-6 text-center leading-[22px] ${i === 0 ? "border-b-[3px] border-[#0696d7] font-bold text-[#0696d7]" : ""}`}>
              {t}
            </div>
          ))}
        </div>
        <div className="flex">
          <Group label="CREATE" icons={["sketch", "extrude", "revolve", "hole", "pattern", "form"]} w="w-[273px]" pad="pl-[5px]" />
          <Sep />
          <Group label="MODIFY" icons={["press", "fillet", "shell", "combine", "split", "move"]} w="w-[267px]" />
          <Sep />
          <Group label="ASSEMBLE" icons={["newcomp", "joint"]} w="w-[96px]" />
          <Sep />
          <Group label="CONSTRUCT" icons={["construct"]} w="w-[98px]" />
          <Sep />
          <Group label="INSPECT" icons={["inspect"]} w="w-[78px]" />
          <Sep />
          <Group label="INSERT" icons={["insert"]} w="w-[68px]" />
          <Sep />
          <Group label="SELECT" icons={["select"]} w="w-[75px]" />
        </div>
      </div>
    </div>
  );
}

/* ---------- browser tree ---------- */
const nodes: { t: string; w: string; icons: React.ReactNode[] }[] = [
  { t: "Document Settings", w: "w-[134px]", icons: [<Gear key="g" c="#989898" />] },
  { t: "Named Views", w: "w-[110px]", icons: [<Folder key="f" />] },
  { t: "Origin", w: "w-[95px]", icons: [<EyeOff key="e" />, <Folder key="f" />] },
  { t: "Bodies", w: "w-[103px]", icons: [<Eye key="e" />, <Folder key="f" />] },
  { t: "Sketches", w: "w-[115px]", icons: [<Eye key="e" />, <Folder key="f" />] },
];

const PanelBar = ({ title, open }: { title: string; open: boolean }) => (
  <div className="flex h-[25px] w-[300px] items-center border border-[#c8c8c8] bg-[#f1f1f1]">
    <div className="ml-1 w-5">
      {open && (
        <Svg w={11} h={7}>
          <path d="M0 3.500 L5 .5 V6.500 Z M5.500 3.500 L10.500 .5 V6.500 Z" fill="#333" />
        </Svg>
      )}
    </div>
    <span className="w-[254px] text-[11px] tracking-[-0.65px] text-[#666]">{title}</span>
    <Svg w={10} className="ml-[-1px]">
      <circle cx="5" cy="5" r="4.700" fill="#2b2b2b" />
      <path d={open ? "M2 5 H8" : "M2 5 H8 M5 2 V8"} stroke="#f1f1f1" strokeWidth="1.400" />
    </Svg>
    <Svg w={4} h={13} className="ml-[6px]">
      <path d="M.5 1 V12 M3 3.500 V9.500" stroke="#777" />
    </Svg>
  </div>
);

function Tree() {
  return (
    <div className="mt-[5px] flex flex-col gap-1 text-[11px] tracking-[-0.12px] text-[#333]">
      <div className="flex h-5 items-center">
        <Svg w={12} className="ml-4">
          <path d="M11.500 .5 V11.500 H.5 Z" fill="#8a8a94" stroke="#222" />
        </Svg>
        <div className="ml-2 flex h-5 w-[228px] items-center bg-[#f1f1f1] pl-[3px]">
          <Eye />
          <div className="ml-[6px] flex h-4 w-[178px] items-center bg-[#989898] pl-[3px]">
            <Svg>
              <path d="M1 4 L5 .8 H15 V12 L12 15.200 H1 Z" fill="#fff" stroke="#333" strokeLinejoin="round" />
              <path d="M2 5 H11.500 V14 H2 Z" fill="#e4e5ea" />
            </Svg>
            <span className="ml-[14px] font-bold tracking-[0.17px] text-white">Crying Zone Sim Sign v3</span>
          </div>
          <Svg w={13} className="ml-1">
            <circle cx="6.500" cy="6.500" r="5.800" fill="#fff" stroke="#333" />
            <circle cx="6.500" cy="6.500" r="2.400" fill="#333" />
          </Svg>
        </div>
      </div>
      {nodes.map((n) => (
        <div key={n.t} className="flex h-5 items-center pl-9">
          <Expand />
          <div className={`ml-2 flex h-5 items-center bg-[#f1f1f1] pl-[3px] ${n.w}`}>
            <div className="flex gap-[9px]">{n.icons}</div>
            <span className="ml-[14px] whitespace-nowrap">{n.t}</span>
          </div>
        </div>
      ))}
    </div>
  );
}

function NavBar() {
  return (
    <div className="ml-[656px] flex h-6 w-[237px] items-center bg-[#f1f1f1] pl-[3px]">
      <Svg>
        <path d="M7 0 H9.500 V16 H7 Z" fill="#fff" stroke="#444" strokeWidth=".9" />
        <path d="M2 11 C-2 6 14 4 15.500 8 C16 11 10 12 4 11.500 M6 9 L2.500 11.500 L6 14" stroke="#333" strokeWidth="1.200" />
      </Svg>
      <span className="ml-[5px]"><Tri w={6} /></span>
      <Svg w={17} className="ml-[6px]">
        <path d="M1 6.500 H16 V15.500 H1 Z" fill="#f8f8f8" stroke="#444" />
        <path d="M4 9.500 H13 V12.500 H4 Z" fill="#ccc" stroke="#444" />
        <path d="M2 6 L6 2 L8 4 L12 1 L13 6" fill="#999" stroke="#666" />
      </Svg>
      <Svg className="ml-[9px]">
        <path d="M5 15.500 L1 9 Q0 7 2 7.500 L4 9 L3 3.500 Q3.500 2 5 3.500 L6 7 L6.500 1.500 Q7.500 0 8.500 1.500 L9 7 L10.500 2 Q12 1 12 3 L11.800 8 L13.500 5 Q15.500 4.500 15 6.500 L12.500 13 L11.500 15.500 Z" fill="#fff" stroke="#333" strokeWidth=".9" />
      </Svg>
      <Svg w={17} className="ml-[10px]">
        <circle cx="6" cy="7" r="4.800" fill="#dfe9ea" stroke="#444" strokeWidth="1.200" />
        <path d="M9 10 L13 14.500" stroke="#333" strokeWidth="2.600" />
        <path d="M11 4 H17 M14 1 V7 M11 8.500 H17" stroke="#333" />
      </Svg>
      <Svg w={17} className="ml-[9px]">
        <path d="M.5 .5 H15.500 V15.500 H.5 Z" stroke="#666" strokeDasharray="2 2" />
        <circle cx="7.500" cy="7" r="5.500" fill="#dfe9ea" stroke="#444" strokeWidth="1.200" />
        <path d="M11.500 11 L16 15.500" stroke="#333" strokeWidth="2.600" />
      </Svg>
      <span className="ml-[4px]"><Tri w={6} /></span>
      <Svg w={16} className="ml-[6px]">
        <path d="M.6 1 H15.400 V12 H.6 Z" fill="#eee" stroke="#444" />
        <path d="M3 3 H13 V10 H3 Z" fill="#9fb9e6" stroke="#2d4a86" />
        <path d="M5 12.500 H11 V15 H5 Z" fill="#ddd" stroke="#555" strokeWidth=".8" />
      </Svg>
      <span className="ml-[3px]"><Tri w={6} /></span>
      <Svg w={16} className="ml-[6px]">
        <path d="M.6 .6 H15.400 V15.400 H.6 Z" fill="#e2e6ea" stroke="#555" />
        <path d="M.6 4 H15 M.6 8 H15 M.6 12 H15 M4 1 V15 M8 1 V15 M12 1 V15" stroke="#777" strokeWidth=".9" />
      </Svg>
      <span className="ml-[2px]"><Tri w={6} /></span>
      <Svg w={16} h={14} className="ml-[7px]">
        <path d="M.6 .6 H15.400 V13.400 H.6 Z M8 .6 V13.400 M.6 7 H15.400" fill="#a9c0ea" stroke="#2d4a86" strokeWidth="1.200" />
        <path d="M3 3 h2.500 v1.500 h-2.500z M10.500 3 h2.500 v1.500 h-2.500z M3 9.500 h2.500 v1.500 h-2.500z M10.500 9.500 h2.500 v1.500 h-2.500z" stroke="#2d4a86" strokeWidth=".7" />
      </Svg>
      <span className="ml-[2px]"><Tri w={6} /></span>
    </div>
  );
}

/* ---------- timeline ---------- */
const feat: Record<string, React.ReactNode> = {
  s: (
    <>
      <path d="M1.500 1.500 H13.500 V13.500 H1.500 Z" stroke="#444" strokeWidth=".9" strokeDasharray="3 1.500" />
      <path d="M0 0 h2.500 v2.500 h-2.500z M12.500 0 h2.500 v2.500 h-2.500z M0 12.500 h2.500 v2.500 h-2.500z" fill="#0b86d6" />
      <path d="M9 15 L14 10" stroke="#ffb43c" strokeWidth="2.600" />
      <path d="M13.500 10.500 L15 9" stroke="#f0404a" strokeWidth="2.600" />
    </>
  ),
  e: (
    <>
      <path d="M0 13 H10 L13 10 V13 L10 16 H0 Z" fill="#ccc" stroke="#777" strokeWidth=".7" />
      <path d="M0 4 L3 .5 H12.500 L9.500 4 Z" fill={B2} />
      <path d="M9.500 4 L12.500 .5 V10 L9.500 13.500 Z" fill={B3} />
      <path d="M0 4 H9.500 V13.500 H0 Z" fill={B1} />
      <path d="M14.500 14 V2 M13.200 4 L14.500 1 L15.800 4" stroke="#222" strokeWidth=".9" />
    </>
  ),
  f: (
    <>
      <path d="M.6 15.400 V8 Q1 1 8 .8 Q15 2 15.400 9 V12 L12 15.400 Z" fill="#d8d8d8" stroke="#666" />
      <path d="M6.500 2.500 L8 .8 Q15 2 15.400 9 L12 11.500 Q12 5 6.500 2.500 Z" fill={B3} />
    </>
  ),
};

function Timeline() {
  return (
    <div className="flex h-[47px] border-t-2 border-[#cdcdcd] bg-[#f1f1f1]">
      <div className="ml-[11px] mt-4 flex h-[14px] items-start">
        <Svg w={12} h={14}><path d="M0 0 H2 V14 H0 Z M12 0 V14 L2 7 Z" fill="#444" /></Svg>
        <Svg w={14} h={14} className="ml-3"><path d="M10 1 V13 L0 7 Z M11 4 H13 V10 H11 Z" fill="#444" /></Svg>
        <Svg w={12} h={15} className="ml-3"><path d="M0 0 L12 7.500 L0 15 Z" fill="#444" /></Svg>
        <Svg w={13} h={14} className="ml-3"><path d="M3 1 V13 L13 7 Z M0 4 H2 V10 H0 Z" fill="#444" /></Svg>
        <Svg w={12} h={14} className="ml-[13px]"><path d="M12 0 H10 V14 H12 Z M0 0 V14 L10 7 Z" fill="#444" /></Svg>
      </div>
      <div className="ml-[23px] mt-[14px] w-[182px]">
        <div className="flex w-[184px] gap-2">
          {["s", "e", "s", "s", "e", "e", "f", "f"].map((k, i) => (
            <Svg key={i}>{feat[k]}</Svg>
          ))}
        </div>
        <div className="ml-2 mt-[3px] flex h-[7px] w-[170px] justify-between border-b-2 border-[#cacaca]">
          {[0, 1, 2, 3, 4, 5, 6, 7].map((i) => (
            <div key={i} className="h-[5px] w-[2px] bg-[#cacaca]" />
          ))}
        </div>
      </div>
      <Svg w={12} h={32} className="mt-2">
        <path d="M0 0 H12 V4 L7 9 V32 H5 V9 L0 4 Z" fill="#5e5e5e" />
      </Svg>
      <div className="ml-auto mr-[13px] mt-[15px]">
        <Gear c="#8f8f8f" w={17} />
      </div>
    </div>
  );
}

export default function App() {
  return (
    <div className="flex h-[1440px] w-[2560px] flex-col overflow-hidden bg-white" style={{ fontFamily: '"Liberation Sans", Arial, sans-serif' }}>
      <div className="flex h-[23px] bg-[#8f8bd8]">
        <div className="flex items-center pl-[3px]">
          <Svg w={14} h={16}>
            <rect width="14" height="16" rx="1.500" fill="#f26a1b" />
            <path d="M0 12 H14 V16 H0 Z" fill="#8c3a08" />
            <path d="M14 0 V12 L11 14 V3 Z" fill="#c9500c" />
            <text x="3.500" y="9.500" fontSize="10" fontWeight="bold" fill="#fff">F</text>
            <text x="3" y="15.500" fontSize="4" fontWeight="bold" fill="#fff">360</text>
          </Svg>
          <span className="ml-[6px] w-[1137px] text-xs tracking-[-0.3px] text-black" style={{ fontFamily: '"Open Sans", "Noto Sans", sans-serif' }}>
            Autodesk Fusion 360 (Education License)
          </span>
        </div>
        <div className="h-px w-24 bg-[#1c1c26]" />
        <div className="ml-12 h-px w-[97px] bg-[#1c1c26]" />
        <div className="ml-auto mr-[19px] flex items-center gap-[35px] pb-[3px]">
          <Svg w={10}><path d="M0 5.500 H10" stroke="#000" /></Svg>
          <Svg w={11}><path d="M.5 2.500 H8.500 V10.500 H.5 Z M2.500 2.500 V.5 H10.500 V8.500 H8.500" stroke="#000" /></Svg>
          <Svg w={11}><path d="M.5 .5 L10.500 10.500 M10.500 .5 L.5 10.500" stroke="#000" /></Svg>
        </div>
      </div>
      <div className="flex h-[1415px]">
        <DataPanel />
        <div className="flex w-[2159px] flex-col border-l border-[#8a8a8a]">
          <TabStrip />
          <Ribbon />
          <main className="relative h-[1254px] bg-white">
            <svg className="absolute left-0 top-0" width="2158" height="1254" viewBox="402 137 2158 1254">
              <Sign />
              <ViewCube />
            </svg>
            <div className="relative flex h-full flex-col justify-between pb-[5px] pl-1 pt-1">
              <div>
                <PanelBar title="BROWSER" open />
                <Tree />
              </div>
              <div className="flex items-center">
                <PanelBar title="COMMENTS" open={false} />
                <NavBar />
              </div>
            </div>
          </main>
          <Timeline />
        </div>
      </div>
      <div className="h-[2px] bg-[#5d587a]" />
    </div>
  );
}
